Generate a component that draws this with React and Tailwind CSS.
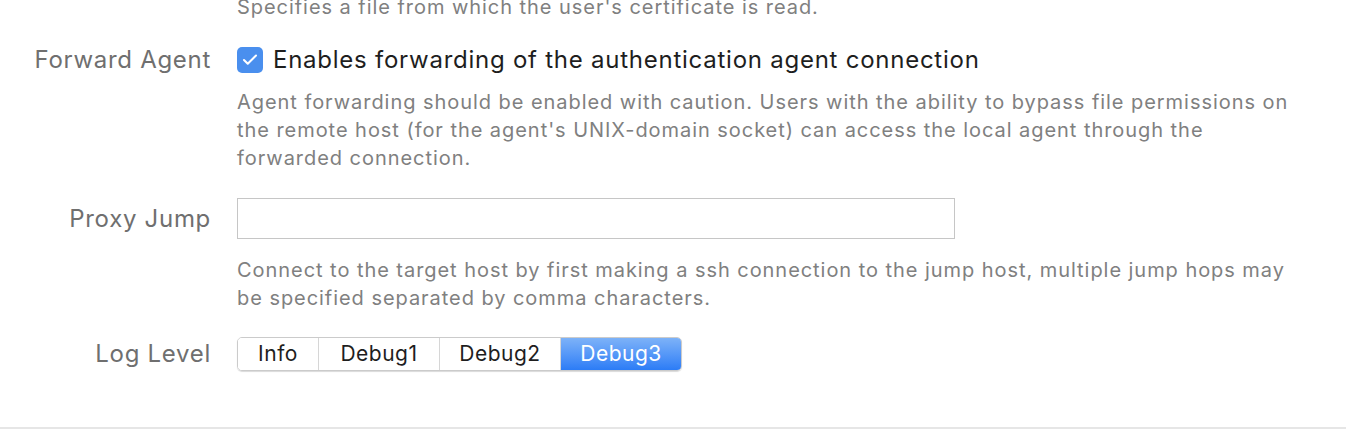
import { Check } from 'lucide-react';

const levels = ['Info', 'Debug1', 'Debug2', 'Debug3'];

function Row({ label, children }) {
    return (
        <div className="flex items-center">
            <div className="w-[211px] shrink-0 text-right text-[24px] tracking-[0.7px] text-[#6f6f6f]">{label}</div>
            <div className="ml-[26px] flex items-center">{children}</div>
        </div>
    );
}

function Help({ children }) {
    return (
        <div className="ml-[237px] whitespace-nowrap text-[20px] leading-[28px] tracking-[0.95px] text-[#808080]">{children}</div>
    );
}

export default function App() {
    const active = 'Debug3';

    return (
        <div className="h-[438px] w-[1346px] overflow-hidden bg-white font-['Inter',sans-serif]">
            <div className="-mt-[7px]">
                <Help>Specifies a file from which the user's certificate is read.</Help>
            </div>

            <div className="mt-[21px]">
                <Row label="Forward Agent">
                    <span className="flex h-[26px] w-[26px] items-center justify-center rounded-[5px] bg-[#4a8fee]">
                        <Check size={18} strokeWidth={2.75} className="text-white" />
                    </span>
                    <span className="ml-[10px] text-[24px] tracking-[0.75px] text-[#1e1e1e]">
                        Enables forwarding of the authentication agent connection
                    </span>
                </Row>
            </div>

            <div className="mt-[10px]">
                <Help>
                    Agent forwarding should be enabled with caution. Users with the ability to bypass file permissions on
                    <br />
                    the remote host (for the agent's UNIX-domain socket) can access the local agent through the
                    <br />
                    forwarded connection.
                </Help>
            </div>

            <div className="mt-[26px]">
                <Row label="Proxy Jump">
                    <input
                        type="text"
                        className="h-[41px] w-[718px] border border-[#c6c6c6] bg-white px-2 text-[20px] outline-none"
                    />
                </Row>
            </div>

            <div className="mt-[17px]">
                <Help>
                    Connect to the target host by first making a ssh connection to the jump host, multiple jump hops may
                    <br />
                    be specified separated by comma characters.
                </Help>
            </div>

            <div className="mt-[24px]">
                <Row label="Log Level">
                    <div className="flex h-[34px] overflow-hidden rounded-[5px] border border-[#cbcbcb] shadow-[0_1px_1px_rgba(0,0,0,0.15)]">
                        {levels.map((lvl, i) => (
                            <div
                                key={lvl}
                                className={
                                    (lvl === active
                                        ? 'bg-gradient-to-b from-[#7db2f8] to-[#2b7cf6] text-white '
                                        : 'bg-white text-[#1e1e1e] ') +
                                    (i > 0 ? 'border-l border-[#d6d6d6] ' : '') +
                                    (i === 0 ? 'w-[80px] ' : 'w-[121px] ') +
                                    'flex items-center justify-center text-[21px] tracking-[0.5px]'
                                }
                            >
                                {lvl}
                            </div>
                        ))}
                    </div>
                </Row>
            </div>

            <div className="mt-[55px] h-[2px] w-full bg-[#e6e6e6]" />
        </div>
    );
}
